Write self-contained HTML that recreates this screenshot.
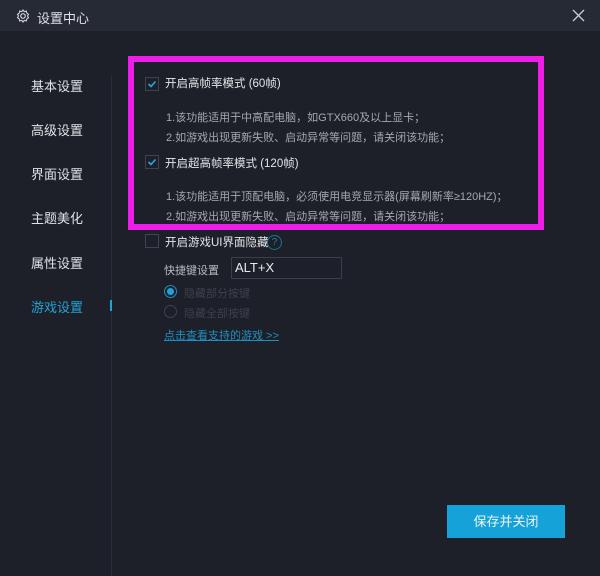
<!DOCTYPE html>
<html><head><meta charset="utf-8"><style>
body{margin:0;width:600px;height:576px;background:#1d2029;font-family:"Liberation Sans","Noto Sans CJK SC",sans-serif;position:relative;overflow:hidden;color:#d6d8dc}
.t{position:absolute;white-space:nowrap}
.title{position:absolute;left:0;top:0;width:600px;height:31px;background:#262a35}
.nav{font-size:13px;color:#dfe1e4;left:31px}
.cb{position:absolute;width:12px;height:12px;border:1px solid #3d4350;background:#1d2029}
.s{font-size:11px;color:#a4a8b0}
.m{font-size:11.5px;color:#e3e5e8}
</style></head><body>
<div class="title"></div>
<svg style="position:absolute;left:16px;top:9px" width="14" height="14" viewBox="0 0 14 14"><circle cx="7" cy="7" r="2.3" fill="none" stroke="#d0d3d8" stroke-width="1.2"/><path d="M7 1l1.3 1.6 2-.5.5 2 1.7 1.3-1 1.6 1 1.6-1.7 1.3-.5 2-2-.5L7 13l-1.3-1.6-2 .5-.5-2L1.5 8.6l1-1.6-1-1.6 1.7-1.3.5-2 2 .5z" fill="none" stroke="#d0d3d8" stroke-width="1.1"/></svg>
<div class="t" style="left:37px;top:8px;font-size:13px;color:#e0e2e6">设置中心</div>
<svg style="position:absolute;left:572px;top:9px" width="13" height="13"><path d="M1 1L12 12M12 1L1 12" stroke="#c8cbd0" stroke-width="1.3"/></svg>
<div style="position:absolute;left:111px;top:75px;width:1px;height:501px;background:#2b2f3a"></div>
<div class="t nav" style="top:76px">基本设置</div>
<div class="t nav" style="top:120px">高级设置</div>
<div class="t nav" style="top:164px">界面设置</div>
<div class="t nav" style="top:208px">主题美化</div>
<div class="t nav" style="top:253px">属性设置</div>
<div class="t nav" style="top:297px;color:#22a3d6">游戏设置</div>
<div style="position:absolute;left:110px;top:300px;width:2px;height:11px;background:#22a3d6"></div>
<div style="position:absolute;left:128px;top:56px;width:404px;height:162px;border:6px solid #ee1ee8"></div>
<div class="cb" style="left:145px;top:77px"></div>
<svg style="position:absolute;left:147px;top:79px" width="10" height="10"><path d="M1.5 5L4 7.5 8.5 2.5" stroke="#2ba8dc" stroke-width="1.6" fill="none"/></svg>
<div class="t m" style="left:165px;top:75px">开启高帧率模式 (60帧)</div>
<div class="t s" style="left:166px;top:109px">1.该功能适用于中高配电脑，如GTX660及以上显卡；</div>
<div class="t s" style="left:166px;top:129px">2.如游戏出现更新失败、启动异常等问题，请关闭该功能；</div>
<div class="cb" style="left:145px;top:155px"></div>
<svg style="position:absolute;left:147px;top:157px" width="10" height="10"><path d="M1.5 5L4 7.5 8.5 2.5" stroke="#2ba8dc" stroke-width="1.6" fill="none"/></svg>
<div class="t m" style="left:165px;top:155px">开启超高帧率模式 (120帧)</div>
<div class="t s" style="left:166px;top:188px">1.该功能适用于顶配电脑，必须使用电竞显示器(屏幕刷新率≥120HZ)；</div>
<div class="t s" style="left:166px;top:208px">2.如游戏出现更新失败、启动异常等问题，请关闭该功能；</div>
<div class="cb" style="left:145px;top:234px"></div>
<div class="t m" style="left:165px;top:234px">开启游戏UI界面隐藏</div>
<div style="position:absolute;left:267px;top:235px;width:13px;height:13px;border:1px solid #1f6f96;border-radius:50%;color:#1f7fae;font-size:10px;text-align:center;line-height:13px">?</div>
<div class="t s" style="left:164px;top:262px;color:#b8bbc2">快捷键设置</div>
<div style="position:absolute;left:231px;top:257px;width:106px;height:20px;border:1px solid #3a3f4b;background:#1d2029;color:#e8eaed;font-size:13px;line-height:20px;padding-left:3px">ALT+X</div>
<div style="position:absolute;left:164px;top:285px;width:11px;height:11px;border:1px solid #1d8fc4;border-radius:50%"></div>
<div style="position:absolute;left:167px;top:288px;width:7px;height:7px;background:#22a3d6;border-radius:50%"></div>
<div class="t s" style="left:184px;top:285px;color:#3d414b">隐藏部分按键</div>
<div style="position:absolute;left:164px;top:305px;width:11px;height:11px;border:1px solid #3d4250;border-radius:50%"></div>
<div class="t s" style="left:184px;top:305px;color:#3d414b">隐藏全部按键</div>
<div class="t s" style="left:164px;top:327px;color:#1f8fc0;text-decoration:underline">点击查看支持的游戏 &gt;&gt;</div>
<div style="position:absolute;left:447px;top:505px;width:118px;height:33px;background:#14a2d8;color:#eef7fb;font-size:13px;text-align:center;line-height:33px">保存并关闭</div>
</body></html>
